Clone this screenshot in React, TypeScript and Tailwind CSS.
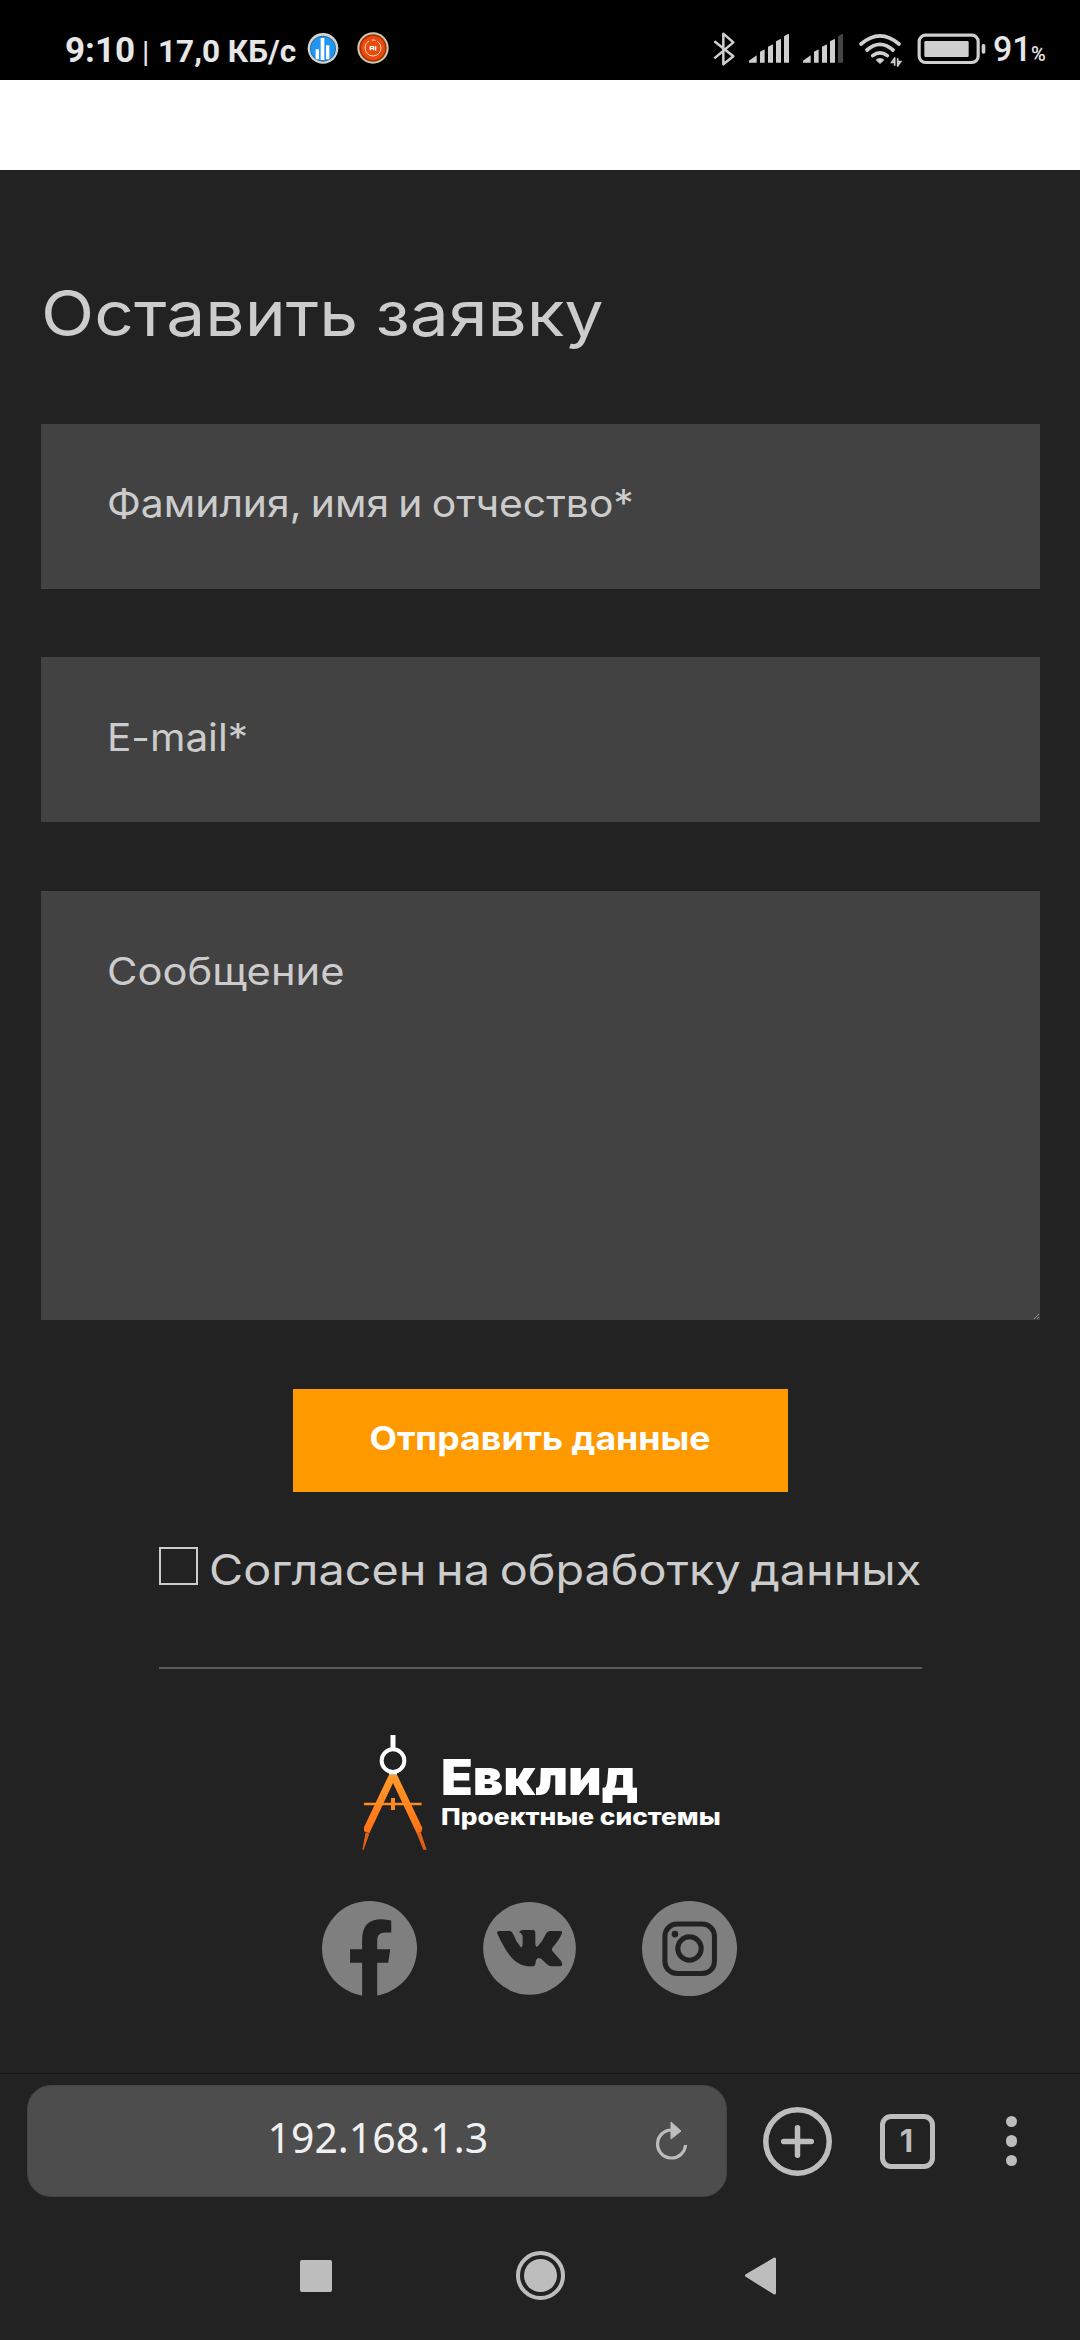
import type { ReactNode } from "react";

const BARS = [
  "M174 158V152L197 136V158Z",
  "M207 158V125L218 119Q221 118 221 121V158Z",
  "M231 158V110L243 104Q246 102 246 106V158Z",
  "M255 158V94L267 88Q270 86 270 90V158Z",
  "M279 158V79L291 72Q294 70 294 74V158Z",
];

function Signal({ weak }: { weak?: boolean }) {
  return (
    <svg className="h-20 w-[40px]" viewBox="174 -30 120 240">
      {BARS.map((d, i) => (
        <path key={d} d={d} fill={weak && i === 4 ? "#454545" : "#cfcfcf"} />
      ))}
    </svg>
  );
}

function StatusBar() {
  return (
    <header className="flex h-20 justify-between bg-black pl-[65px] pr-[33px] font-['Roboto',sans-serif] text-[#e6e6e6]">
      <div className="flex">
        <div className="mt-[31px] flex items-baseline leading-[40px]">
          <span className="w-[77px] text-[35px] font-bold">9:10</span>
          <span className="w-[16px] text-[30px] font-normal">|</span>
          <span className="w-[150px] origin-left scale-x-[0.985] whitespace-nowrap text-[32px] font-bold">17,0 КБ/с</span>
        </div>
        <svg className="-ml-px h-20 w-[32px]" viewBox="802 -30 96 240">
          <circle cx="850" cy="115" r="46" fill="#d9d3c8" />
          <circle cx="850" cy="116" r="39" fill="#1c6fb0" />
          <circle cx="850" cy="116" r="36" fill="#2196f3" />
          <path d="M828 118h10v30h-10zM843 84h11v66h-11zM859 106h10v42h-10z" fill="#fff" />
        </svg>
        <svg className="ml-[18px] h-20 w-[32px]" viewBox="952 -30 96 240">
          <circle cx="1000" cy="114" r="47" fill="#cfcab8" />
          <circle cx="1000" cy="114" r="41" fill="#a83200" />
          <circle cx="1000" cy="114" r="36" fill="#ea4a0c" />
          <circle cx="1000" cy="114" r="24" fill="none" stroke="#ffd9c8" strokeWidth="3" strokeDasharray="100 8 12 6" />
          <path d="M992 121v-11h10v11M992 116h9M1008 109v13" fill="none" stroke="#fff" strokeWidth="4" />
        </svg>
      </div>
      <div className="flex">
        <svg className="h-20 w-[24px]" viewBox="64 -30 72 240" fill="none" stroke="#cfcfcf" strokeWidth="7.500" strokeLinejoin="round">
          <path d="M71 94L128 139L98 163V71L128 97L71 145" />
        </svg>
        <div className="ml-[12.700px]"><Signal /></div>
        <div className="ml-[14px]"><Signal weak /></div>
        <svg className="ml-[15px] h-20 w-[44px]" viewBox="501 -30 132 240" fill="none" stroke="#cfcfcf" strokeWidth="11" strokeLinecap="round">
          <path d="M510 102Q567 53 624 102M528 120Q567 86 606 120M545 137Q567 120 589 137" />
          <path d="M554 150Q567 138 580 150L567 162Z" fill="#cfcfcf" stroke="none" />
          <path d="M611 142V167M611 145L602 157H611M620 170V145M620 167L629 155H620" strokeWidth="5" strokeLinecap="butt" />
        </svg>
        <svg className="ml-[15px] h-20 w-[70px]" viewBox="676 -30 210 240">
          <rect x="682.500" y="75.500" width="177" height="82" rx="19" fill="none" stroke="#cfcfcf" strokeWidth="9.500" />
          <rect x="698" y="93" width="133" height="48" rx="4" fill="#cfcfcf" />
          <rect x="870" y="102" width="11" height="29" rx="5" fill="#cfcfcf" />
        </svg>
        <div className="ml-[6px] mt-[30px] flex items-baseline leading-[40px]">
          <span className="w-[38px] origin-left scale-x-[0.970] text-[35px] font-medium">91</span>
          <span className="w-[16px] text-[20px] font-medium">%</span>
        </div>
      </div>
    </header>
  );
}

function Field({ tall, children }: { tall?: boolean; children: ReactNode }) {
  return (
    <div
      className={
        "relative flex items-start bg-[#424242] pl-[66px] pt-[55px] text-[38px] leading-[48px] " +
        (tall ? "h-[429px]" : "h-[165px]")
      }
    >
      {children}
    </div>
  );
}

function Logo() {
  return (
    <div className="mt-[66px] flex h-[115px] w-[362px] text-white">
      <svg className="ml-px h-[115px] w-[67px]" viewBox="60 75 201 345">
        <defs>
          <linearGradient id="leg" x1="0" y1="190" x2="0" y2="420" gradientUnits="userSpaceOnUse">
            <stop offset="0" stopColor="#ff9d28" />
            <stop offset="1" stopColor="#ff6412" />
          </linearGradient>
        </defs>
        <path d="M159 75V118" stroke="#fff" strokeWidth="15" />
        <circle cx="159" cy="152" r="34" fill="none" stroke="#fff" strokeWidth="12" />
        <path d="M147 194H171L247 354L244 366L230 370L159 219L88 370L72 364V352Z" fill="url(#leg)" />
        <path d="M77 367L88 371L71 419H67Z M230 370L242 366L260 419H250Z" fill="url(#leg)" opacity="0.85" />
        <path d="M72 282H245" stroke="#ff8a20" strokeWidth="7" />
        <path d="M159 264V300" stroke="#ff8a20" strokeWidth="12" />
        <path d="M147 186H171V194H147Z" fill="#fff" />
      </svg>
      <div className="ml-[14px] flex flex-col">
        <span className="mt-[18px] w-[183px] origin-left scale-x-[1.060] whitespace-nowrap text-[49px] font-black leading-[50px]">
          Евклид
        </span>
        <span className="w-[240px] origin-left scale-x-[1.145] whitespace-nowrap text-[23px] font-extrabold leading-[28px]">
          Проектные системы
        </span>
      </div>
    </div>
  );
}

function Socials() {
  return (
    <div className="mt-[51px] flex h-[95px] w-[415px] items-center justify-between">
      <svg className="size-[95px]" viewBox="66 62.500 284 284">
        <circle cx="208" cy="204.500" r="142" fill="#7f7f7f" />
        <path d="M186 350V247H150V207H186V178C186 135 207 117 243 117Q262 118 273 121V157H256C238 157 231 165 231 182V207H270L264 247H231V350Z" fill="#222" />
      </svg>
      <svg className="mr-[1px] size-[93px]" viewBox="549 65 279 279">
        <circle cx="688.500" cy="204" r="139" fill="#7f7f7f" />
        <path d="M596 152H630Q635 152 639 160Q648 184 662 200Q667 203 668 190V172Q668 160 657 156Q662 149 668 149H700Q706 149 706 157V192Q707 203 714 197Q728 182 738 160Q742 152 749 152H782Q788 152 785 161Q778 178 759 200Q752 207 759 214L783 241Q792 258 778 258H753Q747 258 741 252L725 237Q714 228 708 240Q706 258 700 258C645 262 622 222 592 160Q590 152 596 152Z" fill="#222" />
      </svg>
      <svg className="size-[95px]" viewBox="1027.500 62.500 284 284">
        <circle cx="1169.500" cy="204.500" r="142" fill="#7f7f7f" />
        <g fill="none" stroke="#222" strokeWidth="15">
          <rect x="1096" y="131.500" width="148" height="148" rx="36" />
          <circle cx="1169.500" cy="204.500" r="35" />
        </g>
        <circle cx="1126" cy="161.500" r="10" fill="#222" />
      </svg>
    </div>
  );
}

function BrowserBar() {
  return (
    <div className="border-t border-[#191919] pt-[11px]">
      <div className="flex h-[112px] items-center pl-[26.500px]">
        <div className="flex h-[112px] w-[700px] items-center rounded-[24px] border border-[#444] bg-[#4d4d4d] pb-[8px] pl-[240px]">
          <span className="w-[387px] whitespace-nowrap font-['Noto_Sans',sans-serif] text-[41px] leading-[56px] text-[#f0f0f0]">192.168.1.3</span>
          <svg className="mt-[7px] h-[40px] w-[34px]" viewBox="0 0 34 40">
            <path d="M16.500 9A14 14 0 1 0 30.500 24" fill="none" stroke="#bdbdbd" strokeWidth="3.200" />
            <path d="M16 1L26 10L16 18Z" fill="#bdbdbd" stroke="#bdbdbd" strokeLinejoin="round" />
          </svg>
        </div>
        <svg className="ml-[36.500px] size-[69px]" viewBox="0 0 69 69" fill="none" stroke="#bdbdbd" strokeWidth="5.500">
          <circle cx="34.500" cy="34.500" r="31.700" />
          <path d="M34.500 20.700V48.300M20.700 34.500H48.300" strokeLinecap="round" />
        </svg>
        <div className="ml-[47.500px] flex size-[55px] items-center justify-center rounded-[11px] border-[5.500px] border-[#bdbdbd] pr-[1px] font-['Inter',sans-serif] text-[31px] font-bold text-[#bdbdbd]">
          1
        </div>
        <div className="ml-[71px] flex flex-col gap-[8px]">
          <i className="size-[11.400px] rounded-full bg-[#bdbdbd]" />
          <i className="size-[11.400px] rounded-full bg-[#bdbdbd]" />
          <i className="size-[11.400px] rounded-full bg-[#bdbdbd]" />
        </div>
      </div>
    </div>
  );
}

function NavBar() {
  return (
    <nav className="mt-[54px] flex items-center pl-[300px]">
      <i className="size-[32px] rounded-[2px] bg-[#bdbdbd]" />
      <div className="ml-[184px] flex size-[49px] items-center justify-center rounded-full border-4 border-[#bdbdbd]">
        <i className="size-[33px] rounded-full bg-[#bdbdbd]" />
      </div>
      <svg className="ml-[180px] h-[38px] w-[31px]" viewBox="0 0 31 38">
        <path d="M1.500 18.600L29.500 2V36Z" fill="#bdbdbd" stroke="#bdbdbd" strokeWidth="3" strokeLinejoin="round" />
      </svg>
    </nav>
  );
}

export default function App() {
  return (
    <div className="flex h-[2340px] w-[1080px] flex-col overflow-hidden bg-[#222] font-['Inter',sans-serif] text-[#cccccc]">
      <StatusBar />
      <div className="h-[90px] shrink-0 bg-white" />
      <main className="flex h-[1903px] shrink-0 flex-col px-[41px] pt-[103px]">
        <h1 className="h-[80px] w-fit origin-left scale-x-[1.104] whitespace-nowrap text-[63px] font-normal leading-[80px] [word-spacing:-2px]">
          Оставить заявку
        </h1>
        <div className="mt-[71px] flex w-[999px] flex-col">
          <Field>
            <span className="origin-left scale-x-[1.075] font-normal [word-spacing:-2px]">Фамилия, имя и отчество*</span>
          </Field>
          <div className="h-[68px]" />
          <Field>
            <span className="mt-px origin-left scale-x-[1.065] font-normal">E-mail*</span>
          </Field>
          <div className="h-[69px]" />
          <Field tall>
            <span className="mt-px origin-left scale-x-[1.097] font-normal">Сообщение</span>
            <svg className="absolute bottom-[1px] right-[1px] size-[5px]" viewBox="0 0 5 5">
              <path d="M0 5L5 0M3 5L5 3" stroke="#ccc" strokeWidth="0.600" />
            </svg>
          </Field>
        </div>
        <div className="flex flex-col items-center">
          <button className="mt-[69px] flex h-[103px] w-[495px] items-center justify-center bg-[#ff9900] pb-[4px] text-[32px] font-bold text-white">
            <span className="scale-x-[1.115] whitespace-nowrap">Отправить данные</span>
          </button>
          <label className="mt-[53px] flex h-[50px] w-[763px]">
            <i className="mt-[2px] h-[38px] w-[39px] border-2 border-[#ccc]" />
            <span className="ml-[11px] origin-left scale-x-[1.113] whitespace-nowrap text-[42px] font-normal leading-[50px] [word-spacing:-3px]">
              Согласен на обработку данных
            </span>
          </label>
          <div className="mt-[72px] h-[2px] w-[763px] bg-[#5a5a5a]" />
          <Logo />
          <div className="-ml-[21px]">
            <Socials />
          </div>
        </div>
      </main>
      <BrowserBar />
      <NavBar />
    </div>
  );
}
